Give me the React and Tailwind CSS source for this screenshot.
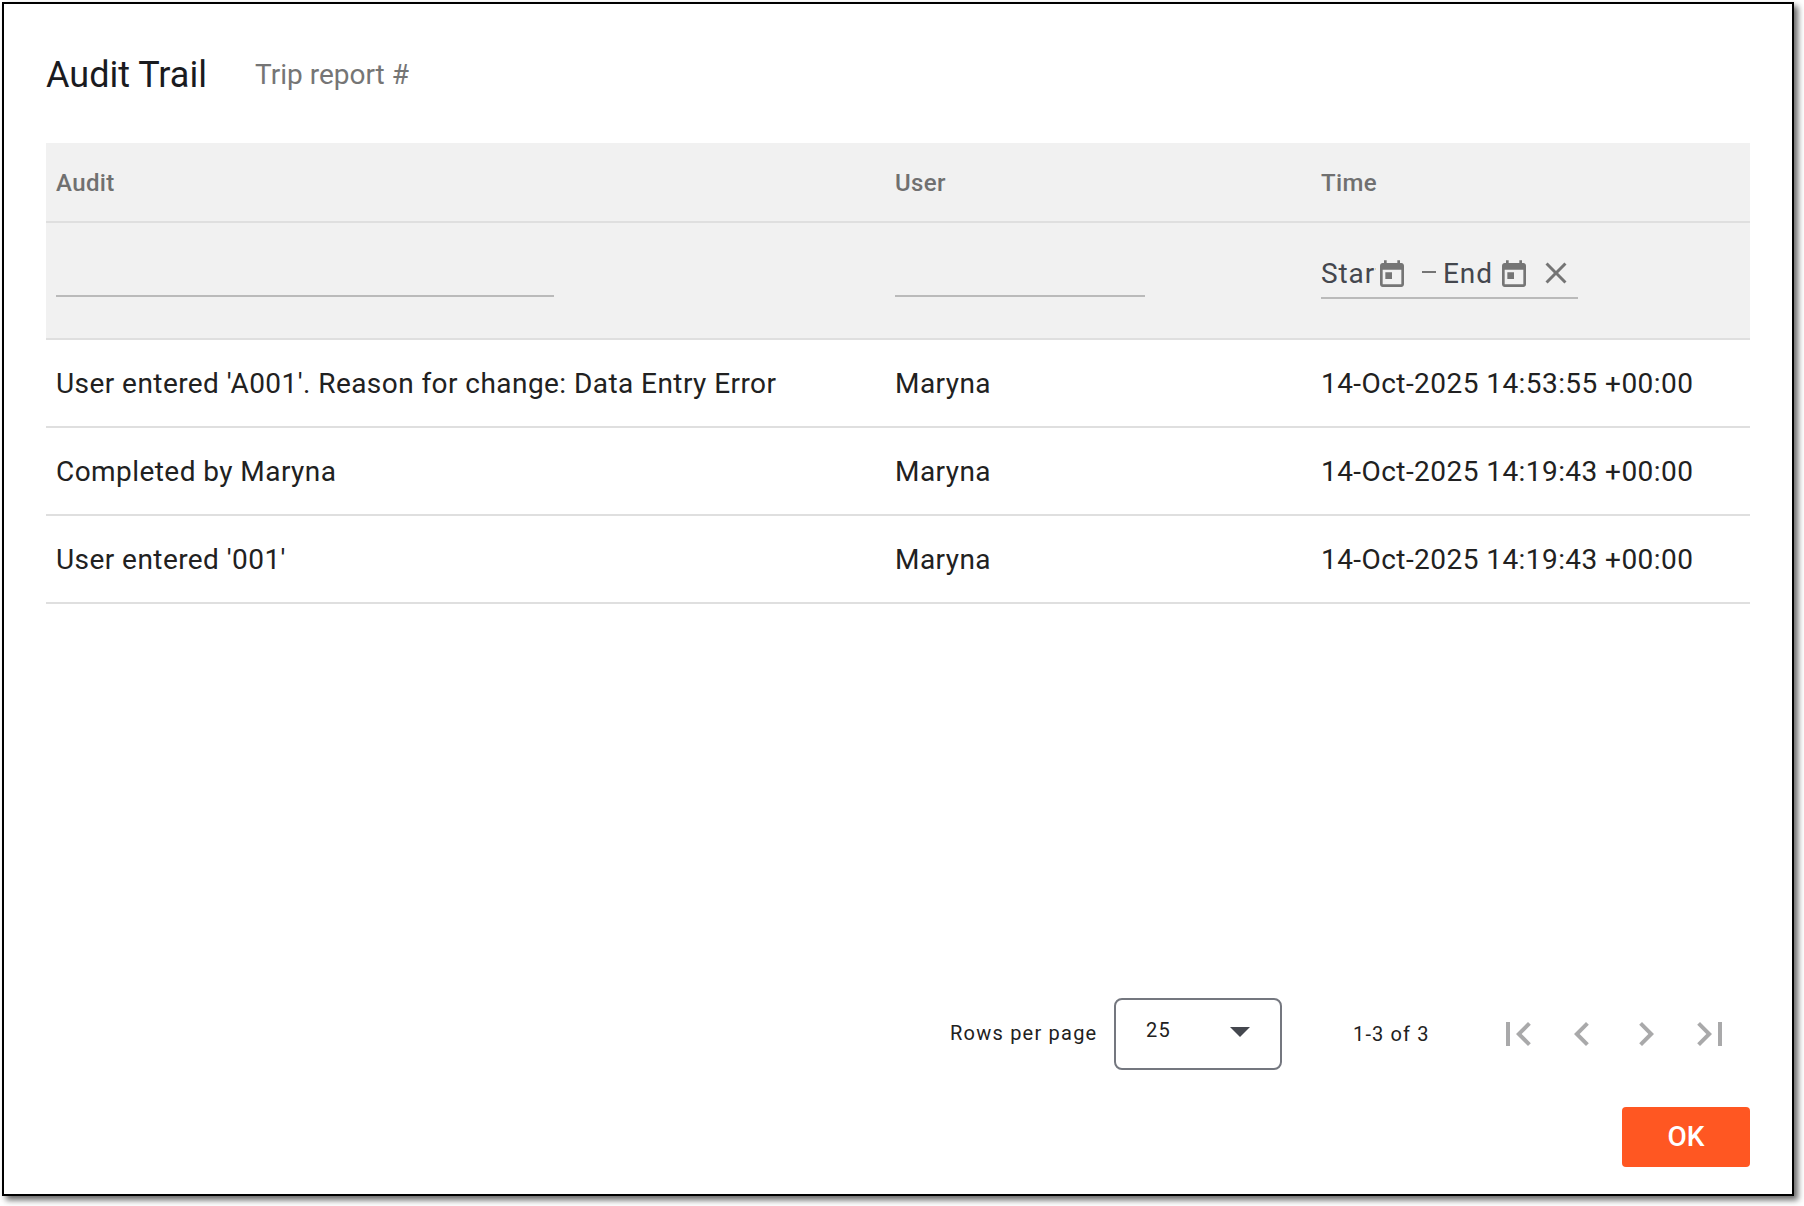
import React, { useState } from 'react';

const ROWS = [
  { audit: "User entered 'A001'. Reason for change: Data Entry Error", user: 'Maryna', time: '14-Oct-2025 14:53:55 +00:00' },
  { audit: 'Completed by Maryna', user: 'Maryna', time: '14-Oct-2025 14:19:43 +00:00' },
  { audit: "User entered '001'", user: 'Maryna', time: '14-Oct-2025 14:19:43 +00:00' },
];

const PAGER_ICONS = [
  { label: 'First page', d: 'M18.41 16.59L13.82 12l4.59-4.59L17 6l-6 6 6 6zM6 6h2v12H6z' },
  { label: 'Previous page', d: 'M15.41 7.41L14 6l-6 6 6 6 1.41-1.41L10.83 12z' },
  { label: 'Next page', d: 'M10 6L8.59 7.41 13.17 12l-4.58 4.59L10 18l6-6z' },
  { label: 'Last page', d: 'M5.59 7.41L10.18 12l-4.59 4.59L7 18l6-6-6-6zM16 6h2v12h-2z' },
];

const COLS = 'grid grid-cols-[839px_426px_1fr] pl-[10px]';

function CalendarIcon() {
  return (
    <svg viewBox="0 0 24 24" className="w-8 h-8 shrink-0 fill-[#757575]">
      <path d="M19 3h-1V1h-2v2H8V1H6v2H5c-1.11 0-1.99.9-1.99 2L3 19c0 1.1.89 2 2 2h14c1.1 0 2-.9 2-2V5c0-1.1-.9-2-2-2zm0 16H5V8h14v11zM7 10h5v5H7z" />
    </svg>
  );
}

function DateRange() {
  return (
    <div className="mt-[28px] w-[257px] h-[48px] border-b-2 border-[#bababa] flex items-start text-[28px] leading-[42px] tracking-[0.9px] text-[#44474e]">
      <div className="mt-[2px] w-[55px] shrink-0 overflow-hidden whitespace-nowrap">Start</div>
      <div className="mt-[8px] shrink-0"><CalendarIcon /></div>
      <div className="mt-[20px] ml-[14px] w-[14px] h-[2px] shrink-0 bg-[#757575]" />
      <div className="mt-[2px] ml-[7px] w-[55px] shrink-0 whitespace-nowrap">End</div>
      <div className="mt-[8px] shrink-0"><CalendarIcon /></div>
      <svg viewBox="0 0 24 24" className="mt-[4px] ml-[8px] w-[36px] h-[36px] shrink-0 fill-[#757575]">
        <path d="M19 6.41L17.59 5 12 10.59 6.41 5 5 6.41 10.59 12 5 17.59 6.41 19 12 13.41 17.59 19 19 17.59 13.41 12z" />
      </svg>
    </div>
  );
}

export default function App() {
  const [filters, setFilters] = useState({ audit: '', user: '' });

  return (
    <div className="w-[1804px] h-[1206px] overflow-hidden bg-white p-[2px] font-['Roboto',sans-serif] antialiased">
      <div className="w-[1792px] h-[1194px] border-2 border-black bg-white shadow-[4px_4px_6px_rgba(0,0,0,0.6)] flex flex-col pl-[42px] pr-[42px]">
        {/* Title */}
        <div className="h-[139px] shrink-0 flex items-start pt-[44px]">
          <h1 className="w-[209px] text-[36px] leading-[54px] text-[#1a1b1f] whitespace-nowrap">Audit Trail</h1>
          <span className="mt-[6px] text-[28px] leading-[42px] text-[#757575]">Trip report #</span>
        </div>

        {/* Table */}
        <div className="shrink-0">
          <div className="bg-[#f1f1f1]">
            <div className={`${COLS} h-[80px] pt-[2px] border-b-2 border-[#dfdfdf] items-center text-[24px] font-medium tracking-[0.4px] text-[#707070]`}>
              <div>Audit</div>
              <div>User</div>
              <div>Time</div>
            </div>
            <div className={`${COLS} h-[117px] border-b-2 border-[#dfdfdf] items-start`}>
              <input
                aria-label="Filter audit"
                value={filters.audit}
                onChange={(e)=>setFilters({ ...filters, audit: e.target.value })}
                className="mt-[26px] w-[498px] h-[48px] border-b-2 border-[#bababa] bg-transparent text-[28px] outline-none"
              />
              <input
                aria-label="Filter user"
                value={filters.user}
                onChange={(e)=>setFilters({ ...filters, user: e.target.value })}
                className="mt-[26px] w-[250px] h-[48px] border-b-2 border-[#bababa] bg-transparent text-[28px] outline-none"
              />
              <DateRange />
            </div>
          </div>
          {ROWS.map((r, i) => (
            <div key={i} className={`${COLS} h-[88px] pt-[2px] border-b-2 border-[#dfdfdf] items-center text-[28px] tracking-[0.44px] text-[#212121] whitespace-nowrap`}>
              <div>{r.audit}</div>
              <div>{r.user}</div>
              <div>{r.time}</div>
            </div>
          ))}
        </div>

        {/* Pagination */}
        <div className="mt-auto h-[72px] shrink-0 flex items-center justify-end text-[20px] text-[#212121] whitespace-nowrap">
          <div className="w-[164px] mb-[2px] tracking-[1.22px]">Rows per page</div>
          <div className="w-[168px] h-[72px] shrink-0 border-2 border-[#74777f] rounded-[8px] flex items-center justify-between pl-[30px] pr-[30px]">
            <span className="mb-[8px] tracking-[1.3px]">25</span>
            <svg viewBox="0 0 20 10" className="mb-[4px] w-[20px] h-[10px] fill-[#44474e]"><path d="M0 0h20L10 10z" /></svg>
          </div>
          <div className="ml-[71px] w-[141px] tracking-[1.15px]">1-3 of 3</div>
          <div className="flex gap-[16px] mr-[16px]">
            {PAGER_ICONS.map(p => (
              <button key={p.label} aria-label={p.label} disabled>
                <svg viewBox="0 0 24 24" className="w-12 h-12 fill-[#a9a9aa]"><path d={p.d} /></svg>
              </button>
            ))}
          </div>
        </div>

        {/* Actions */}
        <div className="mt-[37px] mb-[27px] shrink-0 flex justify-end">
          <button className="w-[128px] h-[60px] rounded-[4px] bg-[#ff5722] text-white text-[28px] font-medium">OK</button>
        </div>
      </div>
    </div>
  );
}
